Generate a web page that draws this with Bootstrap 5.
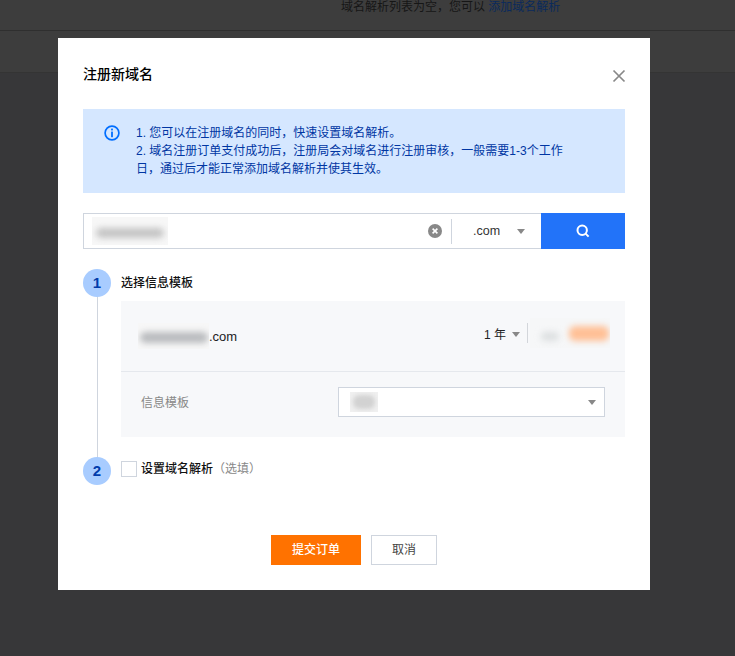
<!DOCTYPE html>
<html lang="zh">
<head>
<meta charset="utf-8">
<title>注册新域名</title>
<link href="https://cdn.jsdelivr.net/npm/bootstrap@5.3.0/dist/css/bootstrap.min.css" rel="stylesheet">
<style>
html,body{height:656px;overflow:hidden}
body{background:#373739;font-family:"Liberation Sans","Noto Sans CJK SC",sans-serif;font-size:12px;line-height:18px;color:#000}
.bg-top{height:31px;background:#3d3d3d;border-bottom:1px solid #2f2f2f;color:#161616;padding-left:341px;line-height:14px}
.bg-top a{color:#0a2a5c;text-decoration:none}
.bg-band{height:42px;background:#3d3d3d;border-bottom:1px solid #343434}
.overlay{position:absolute;inset:0;padding:38px 85px 0 58px}
.dlg{width:592px;height:552px;background:#fff;padding:25px;border:0;border-radius:0;display:flex;flex-direction:column}
.dlg>*{flex:none}
.dlg-head{height:46px;color:#000}
.dlg-title{font-size:14px;line-height:22px;font-weight:500;margin:0}
.x-btn{width:14px;height:14px;margin:6px -1px 0 0;padding:0;border:0;background:none;display:flex}
.tip{height:84px;background:#d5e7ff;color:#0036a3;padding:15px 21px 0;border:0;border-radius:0;margin:0 0 20px;gap:16px}
.tip p{margin:0;width:432px;line-height:18px}
.tip svg{flex:none;margin-top:1px}
.search-row{height:36px}
.search-box{flex:1;border:1px solid #cfd5de;border-right:0;padding-left:8px}
.clear-ico{margin-right:9px}
.search-go{width:84px;background:#2273f9;border:0;border-radius:0;padding:0;display:flex;align-items:center;justify-content:center}
.patch{display:inline-flex;align-items:center;justify-content:center;background:#f7f7f7;overflow:hidden;flex:none}
.patch i{display:block;filter:blur(3px);border-radius:6px}
.patch-a{width:76px;height:28px}
.patch-a i{width:68px;height:10px;background:#c4c4c4;margin-top:3px}
.patch-n{width:71px;height:26px}
.patch-n i{width:68px;height:11px;background:#b9bbbe;margin-top:2px}
.patch-s{width:28px;height:20px;background:#f0f0f0}
.patch-s i{width:22px;height:14px;background:#d2d2d2;filter:blur(2px)}
.patch-p{width:80px;height:30px;background:#f6f7f8;gap:10px;margin-top:-6px;justify-content:flex-end;padding-right:1px}
.patch-p .gr{width:18px;height:9px;background:#dcdfe0;margin-top:6px}
.patch-p .or{width:40px;height:15px;background:#ffc096}
.sep{width:1px;height:25px;background:#cfd5de}
.tld{width:89px;padding-left:21px;color:#333;font-size:12.5px}
.caret-d{width:0;height:0;border-left:4.5px solid transparent;border-right:4.5px solid transparent;border-top:5px solid #888;display:inline-block}
.steps{position:relative;margin-top:20px}
.rail{position:absolute;left:13.5px;top:20px;width:1.5px;height:180px;background:#cfd5de}
.num{position:relative;width:28px;height:28px;border-radius:50%;background:#a8ccff;color:#003cab;font-size:15px;font-weight:700;line-height:28px;text-align:center;flex:none}
.step-one{gap:10px;height:32px}
.step-name{font-weight:500;color:#111;line-height:28px}
.panel{margin-left:38px;height:136px;background:#f7f8fa}
.p-top{height:71px;border-bottom:1px solid #e5e8ed;padding:0 15px 0 17px}
.dom-tail{font-size:13px;color:#222;margin-top:1px}
.p-bot{padding:0 20px;height:61px}
.lab{color:#888;width:197px}
.sel{width:267px;height:30px;background:#fff;border:1px solid #cfd5de;padding:0 8px 0 11px;margin-top:-1px}
.sel .caret-d{margin-left:auto}
.yr{color:#222;margin-top:-3px;gap:6px}
.vsep{width:1px;height:20px;background:#d3d6db;margin:-6px 2px 0 7px}
.step-two{margin-top:20px}
.step-two .num{margin-right:10px}
.chk{width:16px;height:16px;border:1px solid #cfd5de;background:#fff;flex:none;margin:4px 4px 0 0}
.lbl{margin-top:-2px}
.opt{color:#888;line-height:28px}
.foot{margin-top:50px;gap:10px}
.go-btn{width:90px;height:30px;background:#ff7200;color:#fff;border:0;border-radius:0;font-size:12px;font-weight:500;padding:0;line-height:30px}
.no-btn{width:66px;height:30px;background:#fff;color:#444;border:1px solid #cfd5de;border-radius:0;font-size:12px;padding:0;line-height:28px}
</style>
</head>
<body>
<div class="bg-top">域名解析列表为空，您可以 <a href="#">添加域名解析</a></div>
<div class="bg-band"></div>
<div class="overlay">
  <div class="dlg">
    <div class="dlg-head d-flex justify-content-between align-items-start">
      <h5 class="dlg-title">注册新域名</h5>
      <button class="x-btn" type="button" aria-label="关闭"><svg width="14" height="14" viewBox="0 0 14 14"><path d="M1.5 1.5l11 11M12.5 1.5l-11 11" stroke="#888" stroke-width="1.7" fill="none"/></svg></button>
    </div>
    <div class="alert tip d-flex">
      <svg width="16" height="16" viewBox="0 0 16 16"><circle cx="8" cy="8" r="6.9" fill="none" stroke="#006eff" stroke-width="1.7"/><rect x="7.1" y="3.6" width="1.8" height="1.8" fill="#006eff"/><rect x="7.1" y="6.6" width="1.8" height="5.6" fill="#006eff"/></svg>
      <p>1. 您可以在注册域名的同时，快速设置域名解析。<br>2. 域名注册订单支付成功后，注册局会对域名进行注册审核，一般需要1-3个工作日，通过后才能正常添加域名解析并使其生效。</p>
    </div>
    <div class="search-row d-flex">
      <div class="search-box d-flex align-items-center">
        <span class="patch patch-a me-auto"><i></i></span>
        <svg class="clear-ico" width="14" height="14" viewBox="0 0 14 14"><circle cx="7" cy="7" r="7" fill="#888"/><path d="M4.6 4.6l4.8 4.8M9.4 4.6l-4.8 4.8" stroke="#fff" stroke-width="1.6"/></svg>
        <span class="sep"></span>
        <span class="tld d-flex align-items-center"><span>.com</span><span class="caret-d ms-auto me-3"></span></span>
      </div>
      <button class="btn search-go" type="button" aria-label="搜索"><svg width="14" height="14" viewBox="0 0 14 14"><circle cx="6.2" cy="6.2" r="4.7" fill="none" stroke="#fff" stroke-width="2"/><path d="M9.6 9.6l3 3" stroke="#fff" stroke-width="2"/></svg></button>
    </div>
    <div class="steps">
      <span class="rail"></span>
      <div class="step-one d-flex"><span class="num">1</span><span class="step-name">选择信息模板</span></div>
      <div class="panel">
        <div class="p-top d-flex align-items-center">
          <span class="patch patch-n"><i></i></span><span class="dom-tail">.com</span>
          <span class="ms-auto yr d-flex align-items-center"><span>1 年</span><span class="caret-d"></span></span>
          <span class="vsep"></span>
          <span class="patch patch-p"><i class="gr"></i><i class="or"></i></span>
        </div>
        <div class="p-bot d-flex align-items-center">
          <span class="lab">信息模板</span>
          <div class="sel d-flex align-items-center"><span class="patch patch-s"><i></i></span><span class="caret-d"></span></div>
        </div>
      </div>
      <div class="step-two d-flex"><span class="num">2</span><span class="chk"></span><span class="lbl d-flex"><span class="step-name">设置域名解析</span><span class="opt">（选填）</span></span></div>
    </div>
    <div class="foot d-flex justify-content-center">
      <button class="btn go-btn" type="button">提交订单</button>
      <button class="btn no-btn" type="button">取消</button>
    </div>
  </div>
</div>
<script src="https://cdn.jsdelivr.net/npm/bootstrap@5.3.0/dist/js/bootstrap.bundle.min.js"></script>
</body>
</html>
